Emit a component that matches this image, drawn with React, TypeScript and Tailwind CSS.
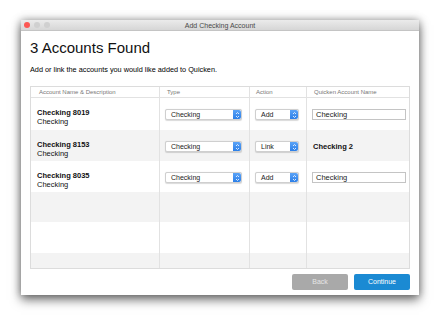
import React from "react";

type Row = {
  name: string;
  type: string;
  action: string;
  quicken: string;
  editable: boolean;
};

const rows: Row[] = [
  { name: "Checking 8019", type: "Checking", action: "Add", quicken: "Checking", editable: true },
  { name: "Checking 8153", type: "Checking", action: "Link", quicken: "Checking 2", editable: false },
  { name: "Checking 8035", type: "Checking", action: "Add", quicken: "Checking", editable: true },
];

const cols = "grid grid-cols-[128px_90px_57px_103px]";

function Stepper() {
  return (
    <svg width="5" height="8" viewBox="0 0 5 8" aria-hidden="true">
      <path d="M1 3 L2.5 1.5 L4 3" fill="none" stroke="white" strokeWidth="0.8" />
      <path d="M1 5 L2.5 6.5 L4 5" fill="none" stroke="white" strokeWidth="0.8" />
    </svg>
  );
}

function Select({ value, width }: { value: string; width: string }) {
  return (
    <div
      className={`${width} flex h-[11px] items-stretch rounded-[2px] border border-[#cfcfcf] bg-white shadow-[0_0.5px_1px_rgba(0,0,0,0.15)]`}
    >
      <span className="flex-1 pl-[5px] text-[7px] leading-[9px] text-[#222]">{value}</span>
      <span className="flex w-[8px] items-center justify-center rounded-r-[2px] bg-gradient-to-b from-[#5aa3f7] to-[#2b7fe8]">
        <Stepper />
      </span>
    </div>
  );
}

export default function App() {
  return (
    <div className="h-[317px] w-[440px] bg-white pl-[21px] pt-[20px] font-['Liberation_Sans',Arial,sans-serif]">
      <div className="flex h-[275px] w-[398px] flex-col bg-white shadow-[0_5px_10px_rgba(0,0,0,0.5),0_0_8px_rgba(0,0,0,0.35)]">
        {/* title bar */}
        <div className="relative flex h-[11px] items-center justify-center border-b border-[#c4c4c4] bg-gradient-to-b from-[#ebebeb] to-[#d6d6d6]">
          <div className="absolute left-[3px] top-[2px] flex gap-[4px]">
            <span className="h-[6px] w-[6px] rounded-full bg-[#fc5753]" />
            <span className="h-[6px] w-[6px] rounded-full bg-[#d0d0d0]" />
            <span className="h-[6px] w-[6px] rounded-full bg-[#d0d0d0]" />
          </div>
          <span className="text-[7px] leading-[9px] text-[#4a4a4a]">Add Checking Account</span>
        </div>

        <div className="flex flex-1 flex-col px-[9px]">
          <h1 className="mt-[8px] text-[15px] leading-[17px] text-[#111]">3 Accounts Found</h1>
          <p className="mt-[9px] text-[7.3px] leading-[10px] text-black">
            Add or link the accounts you would like added to Quicken.
          </p>

          <div className="mt-[11px] w-[380px] border border-[#dcdcdc]">
            <div className={`${cols} h-[11px] border-b border-[#e2e2e2] text-[6px] leading-[10px] text-[#777]`}>
              <div className="pl-[8px]">Account Name &amp; Description</div>
              <div className="border-l border-[#e2e2e2] pl-[7px]">Type</div>
              <div className="border-l border-[#e2e2e2] pl-[6px]">Action</div>
              <div className="border-l border-[#e2e2e2] pl-[7px]">Quicken Account Name</div>
            </div>

            {rows.map((r, i) => (
              <div
                key={r.name}
                className={`${cols} ${i === 0 ? "h-[32px]" : "h-[31px]"} ${i % 2 === 1 ? "bg-[#f3f3f3]" : "bg-white"}`}
              >
                <div className="pl-[6px] pt-[11px] text-[7.5px] leading-[8.7px] text-[#111]">
                  <div className="font-bold">{r.name}</div>
                  <div>Checking</div>
                </div>
                <div className="border-l border-[#e2e2e2] pl-[5px] pt-[11px]">
                  <Select value={r.type} width="w-[77px]" />
                </div>
                <div className="border-l border-[#e2e2e2] pl-[5px] pt-[11px]">
                  <Select value={r.action} width="w-[44px]" />
                </div>
                <div className="border-l border-[#e2e2e2] pl-[5px] pt-[11px]">
                  {r.editable ? (
                    <div className="flex h-[11px] w-[94px] items-center border border-[#c4c4c4] bg-white pl-[3px] text-[7.5px] text-[#222]">
                      {r.quicken}
                    </div>
                  ) : (
                    <div className="pl-[1px] text-[7.5px] font-bold leading-[11px] text-[#111]">{r.quicken}</div>
                  )}
                </div>
              </div>
            ))}

            {[
              { h: "h-[30px]", bg: "bg-[#f3f3f3]" },
              { h: "h-[31px]", bg: "bg-white" },
              { h: "h-[15px]", bg: "bg-[#f3f3f3]" },
            ].map((e, i) => (
              <div key={i} className={`${cols} ${e.h} ${e.bg}`}>
                <div />
                <div className="border-l border-[#e2e2e2]" />
                <div className="border-l border-[#e2e2e2]" />
                <div className="border-l border-[#e2e2e2]" />
              </div>
            ))}
          </div>

          <div className="mt-[5px] flex justify-end gap-[6px]">
            <button
              type="button"
              className="h-[16px] w-[56px] rounded-[2px] bg-[#a9a9a9] text-[7px] text-[#e6e6e6]"
            >
              Back
            </button>
            <button
              type="button"
              className="h-[16px] w-[56px] rounded-[2px] bg-[#1b8ad3] text-[7px] text-white"
            >
              Continue
            </button>
          </div>
        </div>
      </div>
    </div>
  );
}
